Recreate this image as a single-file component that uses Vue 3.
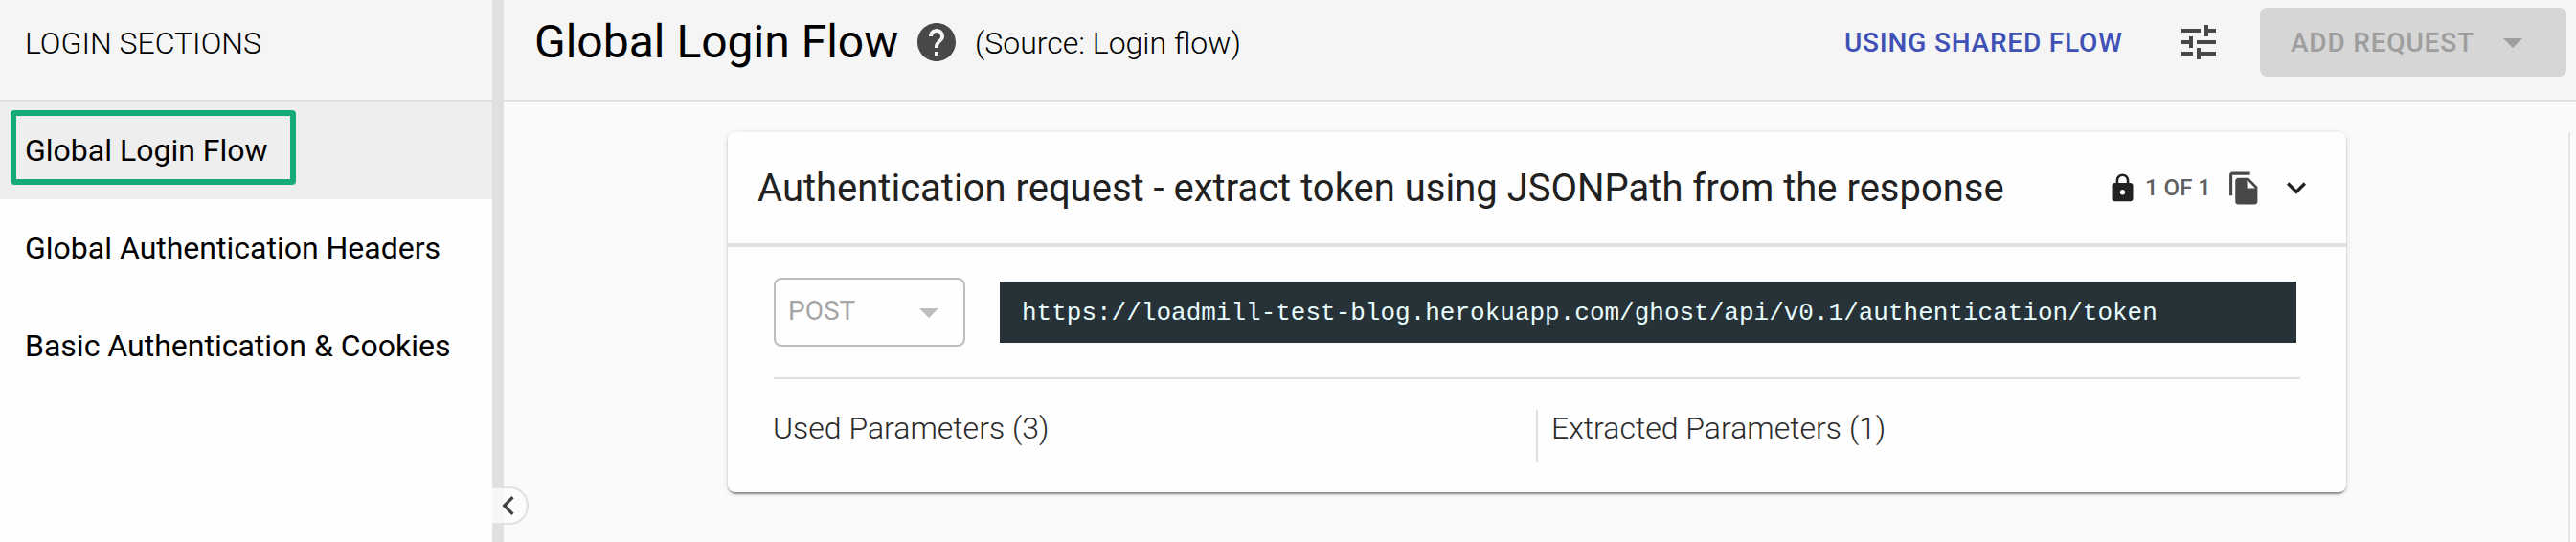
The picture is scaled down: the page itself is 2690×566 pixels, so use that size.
<script setup>
import { ref } from 'vue'

const sections = ['Global Login Flow', 'Global Authentication Headers', 'Basic Authentication & Cookies']
const active = ref(0)
</script>

<template>
  <div class="app">
    <aside class="sidebar">
      <div class="side-head"><span class="t-side">LOGIN SECTIONS</span></div>
      <nav>
        <div
          v-for="(s, i) in sections"
          :key="s"
          class="item"
          :class="{ active: i === active }"
          @click="active = i"
        >
          <span class="t-item">{{ s }}</span>
          <i v-if="i === 0" class="highlight"></i>
        </div>
      </nav>
    </aside>
    <div class="divider">
      <button class="collapse" aria-label="Collapse">
        <svg viewBox="0 0 24 24" width="40" height="40"><path d="M15.41 7.41L14 6l-6 6 6 6 1.41-1.41L10.83 12z" /></svg>
      </button>
    </div>
    <main class="main">
      <header class="topbar">
        <h1>Global Login Flow</h1>
        <svg class="ico help" viewBox="0 0 24 24" width="48" height="48"><path d="M12 2C6.48 2 2 6.48 2 12s4.48 10 10 10 10-4.48 10-10S17.52 2 12 2zm1 17h-2v-2h2v2zm2.07-7.75l-.9.92C13.45 12.9 13 13.5 13 15h-2v-.5c0-1.1.45-2.1 1.17-2.83l1.24-1.26c.37-.36.59-.86.59-1.41 0-1.1-.9-2-2-2s-2 .9-2 2H8c0-2.21 1.79-4 4-4s4 1.79 4 4c0 .88-.36 1.68-.93 2.25z" /></svg>
        <span class="source">(Source: Login flow)</span>
        <span class="grow"></span>
        <span class="shared">USING SHARED FLOW</span>
        <svg class="ico tune" viewBox="0 0 24 24" width="48" height="48"><path d="M3 17v2h6v-2H3zM3 5v2h10V5H3zm10 16v-2h8v-2h-8v-2h-2v6h2zM7 9v2H3v2h4v2h2V9H7zm14 4v-2H11v2h10zm-6-4h2V7h4V5h-4V3h-2v6z" /></svg>
        <button class="add">
          <span class="t-add">ADD REQUEST</span>
          <svg viewBox="0 0 24 24" width="48" height="48"><path d="M7 10l5 5 5-5z" /></svg>
        </button>
      </header>
      <div class="content">
        <section class="card">
          <div class="card-head">
            <h2>Authentication request - extract token using JSONPath from the response</h2>
            <span class="grow"></span>
            <svg class="lock" viewBox="0 0 24 24" width="33" height="33"><path d="M18 8h-1V6c0-2.76-2.24-5-5-5S7 3.24 7 6v2H6c-1.1 0-2 .9-2 2v10c0 1.1.9 2 2 2h12c1.1 0 2-.9 2-2V10c0-1.1-.9-2-2-2zm-6 9c-1.1 0-2-.9-2-2s.9-2 2-2 2 .9 2 2-.9 2-2 2zm3.1-9H8.9V6c0-1.71 1.39-3.1 3.1-3.1 1.71 0 3.1 1.39 3.1 3.1v2z" /></svg>
            <span class="count">1 OF 1</span>
            <svg class="copy" viewBox="0 0 24 24" width="37" height="37"><path d="M16 1H4c-1.1 0-2 .9-2 2v14h2V3h12V1zm-1 4l6 6v10c0 1.1-.9 2-2 2H7.99C6.89 23 6 22.1 6 21l.01-14c0-1.1.89-2 1.99-2h7zm-1 7h5.5L14 6.5V12z" /></svg>
            <svg class="more" viewBox="0 0 24 24" width="40" height="40"><path d="M16.59 8.59L12 13.17 7.41 8.59 6 10l6 6 6-6z" /></svg>
          </div>
          <div class="card-body">
            <div class="request">
              <div class="method">
                <span class="t-post">POST</span>
                <svg viewBox="0 0 24 24" width="48" height="48"><path d="M7 10l5 5 5-5z" /></svg>
              </div>
              <div class="url">https://loadmill-test-blog.herokuapp.com/ghost/api/v0.1/authentication/token</div>
            </div>
            <div class="params">
              <div class="col used"><span>Used Parameters (3)</span></div>
              <div class="col extracted"><span>Extracted Parameters (1)</span></div>
            </div>
          </div>
        </section>
      </div>
    </main>
  </div>
</template>

<style>
html,
body {
  margin: 0;
  overflow: hidden;
}
</style>

<style scoped>
.app {
  display: flex;
  width: 2690px;
  height: 566px;
  overflow: hidden;
  background: #fafafa;
  color: #000;
  font-family: Roboto, "Liberation Sans", sans-serif;
  font-size: 32px;
}
.app * {
  box-sizing: border-box;
}
span,
h1,
h2 {
  white-space: nowrap;
}
svg {
  display: block;
  flex: none;
  fill: currentColor;
}
button {
  font: inherit;
}
.grow {
  flex: 1;
}
.sidebar {
  flex: none;
  width: 514px;
  background: #fefefe;
}
.side-head {
  display: flex;
  align-items: center;
  height: 106px;
  padding: 0 26px 14px;
  background: #f5f5f5;
  border-bottom: 2px solid #e0e0e0;
  font-weight: 300;
}
.item {
  position: relative;
  display: flex;
  align-items: center;
  height: 102px;
  padding-left: 26px;
}
.active {
  background: #eee;
}
.highlight {
  position: absolute;
  left: 11px;
  top: 9px;
  width: 298px;
  height: 78px;
  border: 6px solid #15ac77;
  border-radius: 4px;
}
.divider {
  position: relative;
  flex: none;
  width: 12px;
  background: #e0e0e0;
}
.collapse {
  position: absolute;
  z-index: 1;
  left: 0;
  top: 508px;
  width: 38px;
  height: 40px;
  padding: 0 3px 0 0;
  overflow: hidden;
  display: flex;
  align-items: center;
  justify-content: center;
  border: 2px solid #e0e0e0;
  border-left: 0;
  border-radius: 0 20px 20px 0;
  background: linear-gradient(90deg, #f7f7f7 12px, #fcfcfc 12px);
  color: #424242;
}
.main {
  flex: 1;
  min-width: 0;
}
.topbar {
  display: flex;
  align-items: center;
  height: 106px;
  padding: 0 10px 16px 32px;
  background: #f5f5f5;
  border-bottom: 2px solid #e0e0e0;
}
h1 {
  margin: 0;
  font-size: 48px;
  font-weight: 400;
  line-height: 56px;
  width: 396px;
}
.ico {
  color: #484848;
}
.source {
  margin-left: 16px;
  padding-top: 2px;
  font-weight: 300;
}
.shared {
  width: 289px;
  color: #3f51b5;
  font-size: 28px;
  font-weight: 500;
  letter-spacing: 0.8px;
}
.tune {
  margin: 0 40px 0 57px;
}
.add {
  display: flex;
  align-items: center;
  width: 320px;
  height: 72px;
  padding: 0 32px;
  justify-content: space-between;
  border: 0;
  border-radius: 8px;
  background: #d6d6d6;
  color: #9e9e9e;
  font-size: 28px;
  font-weight: 500;
  letter-spacing: 0.8px;
}
.content {
  height: 428px;
  margin: 32px 6px 0 0;
  padding-left: 234px;
  border-right: 2px solid #e6e6e6;
}
.card {
  width: 1690px;
  height: 376px;
  border-radius: 8px;
  background: #fefefe;
  box-shadow: 0 6px 2px -4px rgba(0, 0, 0, 0.2), 0 2px 2px rgba(0, 0, 0, 0.24), 0 1px 6px rgba(0, 0, 0, 0.12);
}
.card-head {
  display: flex;
  align-items: center;
  height: 120px;
  padding: 0 32px 0 31px;
  border-bottom: 4px solid #e0e0e0;
  color: #212121;
}
h2 {
  margin: 0;
  font-size: 40px;
  font-weight: 400;
}
.count {
  width: 72px;
  margin: 0 13px 0 7px;
  color: #616161;
  font-size: 24px;
  font-weight: 500;
}
.copy {
  color: #484848;
  margin-right: 16px;
}
.card-body {
  padding: 32px 48px 0;
}
.request {
  display: flex;
  align-items: center;
  height: 106px;
  padding-bottom: 32px;
  border-bottom: 2px solid #e0e0e0;
}
.method {
  display: flex;
  align-items: center;
  justify-content: space-between;
  width: 200px;
  height: 72px;
  padding: 0 12px 0 13px;
  border: 2px solid #bdbdbd;
  border-radius: 8px;
  color: #bdbdbd;
  font-size: 28px;
}
.t-post {
  padding-bottom: 3px;
  color: #a5a5a5;
}
.url {
  width: 1354px;
  height: 64px;
  margin-left: 36px;
  padding-left: 23px;
  background: #263238;
  color: #e9fcfc;
  font: 26px/66px "Liberation Mono", monospace;
  white-space: nowrap;
}
.params {
  display: flex;
  padding-top: 32px;
  color: #2a2a2a;
  font-weight: 300;
}
.col {
  height: 54px;
  line-height: 38px;
}
.used {
  width: 796px;
}
.used span {
  margin-left: -1px;
}
.extracted {
  padding-left: 14px;
  border-left: 2px solid #e0e0e0;
}
</style>
